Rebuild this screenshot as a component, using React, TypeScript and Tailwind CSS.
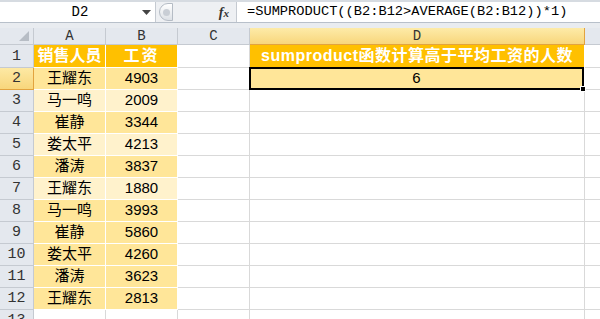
import React from "react";

const rows: [string, string][] = [
  ["王耀东", "4903"],
  ["马一鸣", "2009"],
  ["崔静", "3344"],
  ["娄太平", "4213"],
  ["潘涛", "3837"],
  ["王耀东", "1880"],
  ["马一鸣", "3993"],
  ["崔静", "5860"],
  ["娄太平", "4260"],
  ["潘涛", "3623"],
  ["王耀东", "2813"],
];

const lightRows = [3, 5, 7];

const mono = { fontFamily: '"Liberation Mono", "DejaVu Sans Mono", monospace' };
const cjk = { fontFamily: '"Liberation Sans", "Noto Sans CJK SC", sans-serif' };

const RowHeader: React.FC<{ n: number; active?: boolean; h: string }> = ({ n, active, h }) => (
  <div
    className={`w-[34px] shrink-0 ${h} flex items-end justify-center pb-[1px] text-[15px] leading-[18px] text-[#333] border-r border-b ${
      active
        ? "bg-gradient-to-b from-[#fde9a4] to-[#f8d67b] border-r-[#e2a33f] border-b-[#e2a33f]"
        : "bg-[#e4e8ee] border-[#c5cad1]"
    }`}
    style={mono}
  >
    {n}
  </div>
);

export default function App() {
  return (
    <div className="w-[600px] h-[319px] overflow-hidden bg-white text-black" style={cjk}>
      {/* formula bar */}
      <div className="h-[28px] bg-[#dfe3e8] flex flex-col">
        <div className="h-[22px] flex bg-white border-t-2 border-[#d6dbe1]">
          <div className="w-[156px] flex items-center border-r border-[#c5cad1]">
            <div className="flex-1 text-center text-[14px] pl-[18px]" style={mono}>
              D2
            </div>
            <svg width="9" height="5" viewBox="0 0 9 5" className="mr-[4px]">
              <path d="M0 0h9L4.5 5z" fill="#444" />
            </svg>
          </div>
          <div className="w-[81px] flex items-center bg-[#eef0f3] border-r border-[#c5cad1]">
            <div className="ml-[3px] w-[14px] h-[18px] rounded-l-full border border-[#b5bcc5] bg-gradient-to-b from-[#ffffff] to-[#dde1e6] flex items-center justify-center">
              <div className="w-[7px] h-[7px] rounded-full bg-[#c9ced5]" />
            </div>
            <div className="flex-1" />
            <span className="mr-[7px] text-[14px] italic font-bold text-[#333]" style={{ fontFamily: '"Liberation Serif", serif' }}>
              f<span className="text-[11px]">x</span>
            </span>
          </div>
          <div className="flex-1 flex items-center pl-[10px] text-[13.7px] whitespace-nowrap" style={mono}>
            =SUMPRODUCT((B2:B12&gt;AVERAGE(B2:B12))*1)
          </div>
        </div>
        <div className="h-[6px] border-t border-[#b8c0ca] bg-[#e9ecf0]" />
      </div>

      {/* column header */}
      <div className="flex h-[17px]">
        <div className="w-[34px] shrink-0 bg-[#e4e8ee] border-r border-b border-[#c5cad1] relative">
          <svg width="10" height="10" className="absolute right-[4px] bottom-[3px]">
            <path d="M10 0V10H0z" fill="#b7bdc5" />
          </svg>
        </div>
        {["A", "B", "C"].map((c) => (
          <div
            key={c}
            className="w-[72px] shrink-0 bg-[#e4e8ee] border-r border-b border-[#c5cad1] text-center text-[14px] leading-[16px] text-[#333]"
            style={mono}
          >
            {c}
          </div>
        ))}
        <div
          className="w-[335px] shrink-0 bg-gradient-to-b from-[#fdeba8] to-[#f8d67b] border-r border-b border-[#e2a33f] text-center text-[14px] leading-[16px] text-[#333]"
          style={mono}
        >
          D
        </div>
        <div className="flex-1 bg-[#e4e8ee] border-b border-[#c5cad1]" />
      </div>

      {/* row 1 */}
      <div className="flex h-[23px]">
        <RowHeader n={1} h="h-[23px]" />
        <div className="w-[72px] shrink-0 bg-[#ffc000] border-r border-b border-white text-white font-bold text-[16px] flex items-center justify-center">
          销售人员
        </div>
        <div className="w-[72px] shrink-0 bg-[#ffc000] border-r border-b border-white text-white font-bold text-[16px] flex items-center justify-center tracking-[2px]">
          工资
        </div>
        <div className="w-[72px] shrink-0 border-r border-b border-[#d9d9d9]" />
        <div className="w-[335px] shrink-0 bg-[#ffc000] border-r border-b border-white text-white font-bold text-[16px] tracking-[0.5px] flex items-center justify-center">
          sumproduct函数计算高于平均工资的人数
        </div>
        <div className="flex-1 border-b border-[#d9d9d9]" />
      </div>

      {rows.map(([name, pay], i) => {
        const r = i + 2;
        const bg = lightRows.includes(r) ? "bg-[#fff2cc]" : "bg-[#ffe699]";
        return (
          <div key={r} className="flex h-[22px]">
            <RowHeader n={r} h="h-[22px]" active={r === 2} />
            <div className={`w-[72px] shrink-0 ${bg} border-r border-b border-white text-[15px] flex items-center justify-center`}>
              {name}
            </div>
            <div className={`w-[72px] shrink-0 ${bg} border-r border-b border-white text-[15px] flex items-center justify-center`}>
              {pay}
            </div>
            <div className="w-[72px] shrink-0 border-r border-b border-[#d9d9d9]" />
            {r === 2 ? (
              <div className="w-[335px] shrink-0 relative bg-[#ffe699] border-[2px] border-black -ml-[1px] -mt-[1px] h-[23px] text-[15px] flex items-center justify-center">
                6
                <div className="absolute -right-[4px] -bottom-[4px] w-[6px] h-[6px] bg-black border border-white" />
              </div>
            ) : (
              <div className="w-[335px] shrink-0 border-r border-b border-[#d9d9d9]" />
            )}
            <div className="flex-1 border-b border-[#d9d9d9]" />
          </div>
        );
      })}

      <div className="flex h-[22px]">
        <RowHeader n={13} h="h-[22px]" />
        <div className="w-[72px] shrink-0 border-r border-b border-[#d9d9d9]" />
        <div className="w-[72px] shrink-0 border-r border-b border-[#d9d9d9]" />
        <div className="w-[72px] shrink-0 border-r border-b border-[#d9d9d9]" />
        <div className="w-[335px] shrink-0 border-r border-b border-[#d9d9d9]" />
        <div className="flex-1 border-b border-[#d9d9d9]" />
      </div>
    </div>
  );
}
